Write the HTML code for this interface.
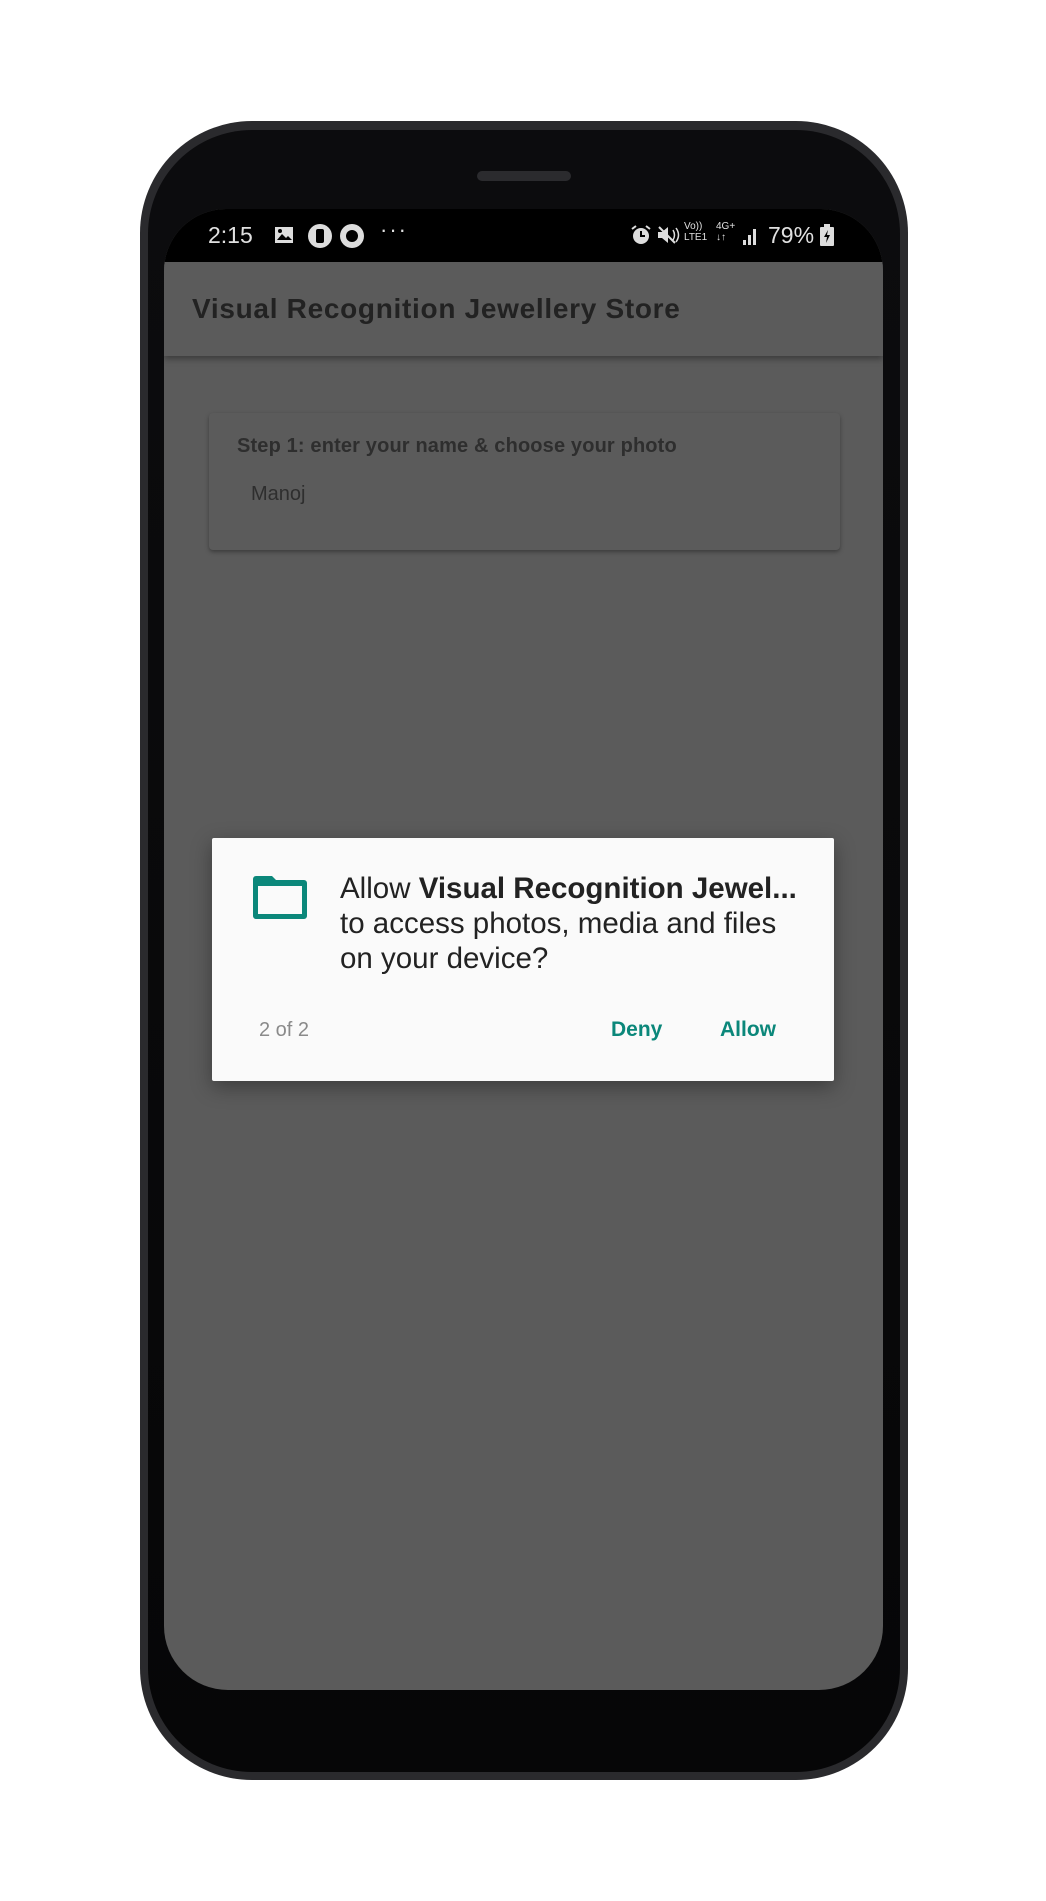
<!DOCTYPE html>
<html><head><meta charset="utf-8">
<style>
*{margin:0;padding:0;box-sizing:border-box}
html,body{width:1046px;height:1901px;background:#fff;overflow:hidden;font-family:"Liberation Sans",sans-serif}
.phone{position:absolute;left:140px;top:121px;width:768px;height:1659px;border-radius:112px;background:#2a2a2d;}
.inner{position:absolute;left:148px;top:130px;width:752px;height:1642px;border-radius:104px;background:linear-gradient(#0c0c0e,#060607);}
.speaker{position:absolute;left:477px;top:171px;width:94px;height:10px;border-radius:5px;background:#2b2b2e}
.screen{position:absolute;left:164px;top:209px;width:719px;height:1481px;border-radius:62px 62px 64px 64px;background:#5b5b5b;overflow:hidden}
.status{position:absolute;left:0;top:0;width:719px;height:53px;background:#000;color:#e0e0e0;font-size:23px}
.appbar{position:absolute;left:0;top:53px;width:719px;height:94px;background:#5b5b5b;box-shadow:0 3px 6px rgba(0,0,0,.35)}
.title{position:absolute;left:28px;top:31px;font-size:28px;font-weight:bold;color:#222;white-space:nowrap;letter-spacing:0.7px}
.card{position:absolute;left:45px;top:204px;width:631px;height:137px;background:#5b5b5b;border-radius:4px;box-shadow:0 2px 4px rgba(0,0,0,.35)}
.dialog{position:absolute;left:212px;top:838px;width:622px;height:243px;background:#fafafa;border-radius:2px;box-shadow:0 6px 20px rgba(0,0,0,.35)}
.dt{position:absolute;left:128px;top:33px;font-size:29.5px;line-height:35px;color:#222;white-space:nowrap}
.btn{position:absolute;top:180px;font-size:21px;font-weight:bold;color:#0b877a}
</style></head><body>
<div class="phone"></div>
<div class="inner"></div>
<div class="speaker"></div>
<div class="screen">
  <div class="status">
    <div style="position:absolute;left:44px;top:13px">2:15</div>
    <svg style="position:absolute;left:110px;top:17px" width="20" height="18"><rect x="1" y="1" width="18" height="16" fill="#ddd"/><path d="M3 14l5-6 4 4 2-2 4 4z" fill="#000"/><circle cx="6" cy="5" r="2" fill="#000"/></svg>
    <svg style="position:absolute;left:143px;top:14px" width="26" height="26"><circle cx="13" cy="13" r="12" fill="#ddd"/><rect x="9" y="6" width="8" height="14" rx="2" fill="#000"/></svg>
    <svg style="position:absolute;left:175px;top:14px" width="26" height="26"><circle cx="13" cy="13" r="12" fill="#ddd"/><circle cx="13" cy="13" r="6" fill="#000"/></svg>
    <div style="position:absolute;left:216px;top:8px;font-size:22px;letter-spacing:2px">···</div>
    <svg style="position:absolute;left:466px;top:15px" width="22" height="22"><circle cx="11" cy="12" r="8" fill="#ddd"/><path d="M11 7v5h4" stroke="#000" stroke-width="2" fill="none"/><path d="M2 5l4-3M20 5l-4-3" stroke="#ddd" stroke-width="2"/></svg>
    <svg style="position:absolute;left:492px;top:15px" width="26" height="22"><path d="M2 8h4l6-5v16l-6-5H2z" fill="#ddd"/><path d="M3 3l16 16" stroke="#ddd" stroke-width="2"/><path d="M17 6q3 5 0 10M20 4q5 7 0 14" stroke="#ddd" stroke-width="1.5" fill="none"/></svg>
    <div style="position:absolute;left:520px;top:12px;font-size:10px;line-height:11px">Vo))<br>LTE1</div>
    <div style="position:absolute;left:552px;top:12px;font-size:10px;line-height:11px">4G+<br>↓↑</div>
    <svg style="position:absolute;left:578px;top:16px" width="18" height="22"><rect x="1" y="15" width="3" height="5" fill="#ddd"/><rect x="6" y="10" width="3" height="10" fill="#ddd"/><rect x="11" y="4" width="3" height="16" fill="#ddd"/></svg>
    <div style="position:absolute;left:604px;top:13px">79%</div>
    <svg style="position:absolute;left:656px;top:15px" width="14" height="22"><rect x="4" y="0" width="6" height="3" fill="#ddd"/><rect x="0" y="3" width="14" height="19" rx="1" fill="#ddd"/><path d="M8 6l-4 7h3l-1 6 4-8H7z" fill="#000"/></svg>
  </div>
  <div class="appbar"><div class="title">Visual Recognition Jewellery Store</div></div>
  <div class="card">
    <div style="position:absolute;left:28px;top:22px;font-size:20px;color:#2e2e2e;white-space:nowrap;font-weight:bold;letter-spacing:0.15px">Step 1: enter your name &amp; choose your photo</div>
    <div style="position:absolute;left:42px;top:70px;font-size:20px;color:#2e2e2e">Manoj</div>
  </div>
</div>
<div class="dialog">
  <svg style="position:absolute;left:41px;top:38px" width="54" height="43" viewBox="0 0 54 43"><path d="M3 0h16l4 4h28a3 3 0 0 1 3 3v33a3 3 0 0 1-3 3H3a3 3 0 0 1-3-3V3a3 3 0 0 1 3-3z" fill="#0b877a"/><rect x="5" y="10" width="44" height="28" fill="#fafafa"/></svg>
  <div class="dt">Allow <b>Visual Recognition Jewel...</b><br>to access photos, media and files<br>on your device?</div>
  <div style="position:absolute;left:47px;top:181px;font-size:20px;color:#8a8a8a">2 of 2</div>
  <div class="btn" style="left:399px">Deny</div>
  <div class="btn" style="left:508px">Allow</div>
</div>
</body></html>
